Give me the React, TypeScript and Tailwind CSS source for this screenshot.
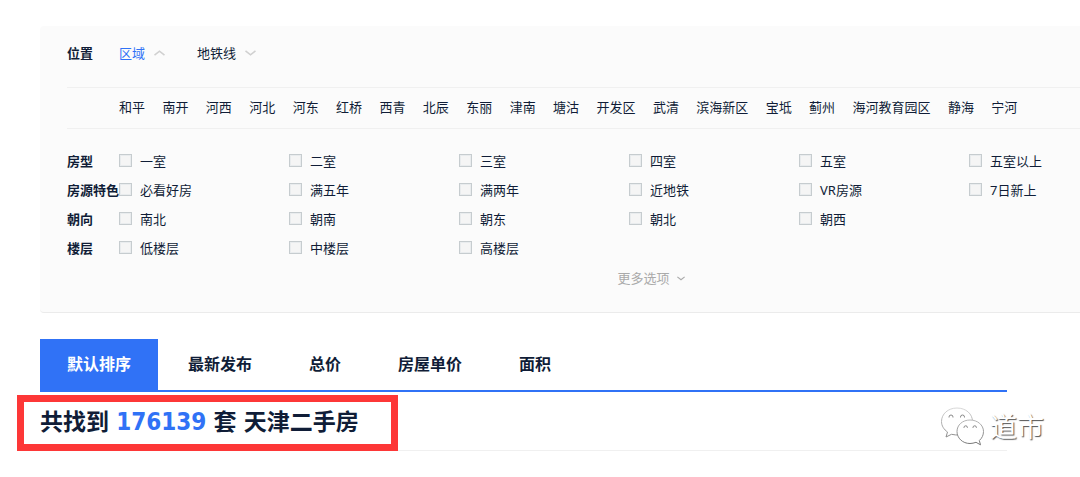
import { useState } from 'react'

interface FilterGroup {
  label: string
  options: string[]
}

const districts = [
  '和平', '南开', '河西', '河北', '河东', '红桥', '西青', '北辰', '东丽', '津南',
  '塘沽', '开发区', '武清', '滨海新区', '宝坻', '蓟州', '海河教育园区', '静海', '宁河'
]

const filterGroups: FilterGroup[] = [
  { label: '房型', options: ['一室', '二室', '三室', '四室', '五室', '五室以上'] },
  { label: '房源特色', options: ['必看好房', '满五年', '满两年', '近地铁', 'VR房源', '7日新上'] },
  { label: '朝向', options: ['南北', '朝南', '朝东', '朝北', '朝西'] },
  { label: '楼层', options: ['低楼层', '中楼层', '高楼层'] }
]

const sortTabs = ['默认排序', '最新发布', '总价', '房屋单价', '面积']

function Chevron({ up = false, className }: { up?: boolean; className: string }) {
  return (
    <svg viewBox="0 0 11 6" fill="none" stroke="currentColor" className={className} aria-hidden="true">
      <path d={up ? 'M0.5 5.2 L5.5 1.2 L10.5 5.2' : 'M0.5 0.8 L5.5 4.8 L10.5 0.8'} strokeWidth="1.6" />
    </svg>
  )
}

function Filters() {
  return (
    <section className="ml-10 min-w-[1222px] rounded-sm border-b border-[#ebebeb] bg-[#fbfbfb] pt-[17px] pb-6 pl-[27px] text-[13px] leading-5">
      <div className="flex pb-6">
        <h2 className="w-[52px] font-bold">位置</h2>
        <div className="flex gap-8">
          <button type="button" className="flex items-center gap-[9px] text-[#3072f6]">
            区域
            <Chevron up className="h-[6px] w-[11px] text-[#d0d0d0]" />
          </button>
          <button type="button" className="flex items-center gap-[9px]">
            地铁线
            <Chevron className="h-[6px] w-[11px] text-[#d0d0d0]" />
          </button>
        </div>
      </div>

      <div className="border-y border-[#f0f0f0] pt-[9px] pb-[11px] pl-[52px]">
        {districts.map((name) => (
          <span key={name}>
            <a href="#" className="mr-[14px]">{name}</a>{' '}
          </span>
        ))}
      </div>

      <div className="pt-[17px]">
        {filterGroups.map((group) => (
          <fieldset key={group.label} className="flex h-[29px] items-center">
            <legend className="float-left w-[52px] font-bold whitespace-nowrap">{group.label}</legend>
            {group.options.map((option) => (
              <label key={option} className="flex w-[170px] items-center gap-2">
                <input
                  type="checkbox"
                  className="size-[13px] appearance-none border border-[#c6cccf] bg-[#f5f5f5] shadow-[inset_0_0_0_1px_#e9ecee] checked:bg-[#3072f6]"
                />
                {option}
              </label>
            ))}
          </fieldset>
        ))}
      </div>

      <div className="mt-[6px] flex justify-center pr-[27px]">
        <button type="button" className="flex items-center gap-[7px] text-[#aaaaaa]">
          更多选项
          <Chevron className="h-[5px] w-2" />
        </button>
      </div>
    </section>
  )
}

function Watermark() {
  return (
    <div className="absolute top-[406px] left-[940px] flex items-center gap-1">
      <svg viewBox="0 0 46 42" className="h-[42px] w-[46px]" fill="#ffffff" stroke="url(#bubble)" strokeWidth="1" aria-hidden="true">
        <defs>
          <linearGradient id="bubble" gradientUnits="userSpaceOnUse" x1="0" y1="0" x2="0" y2="38">
            <stop offset="0" stopColor="#dddddd" />
            <stop offset="1" stopColor="#777777" />
          </linearGradient>
        </defs>
        <path d="M17 2 C8 2 1.500 8 1.500 15.500 C1.500 20 4 23.500 7.500 26 L6 31 L11.500 28.300 C14 29 17 29 19 29 C28 29 32.500 23 32.500 15.500 C32.500 8 26 2 17 2 Z" />
        <path d="M30 14 C22.500 14 17 19 17 25.500 C17 32 22.500 37.500 30 37.500 C32 37.500 34 37 36 36.300 L40.500 38.800 L39.300 34.500 C42 32.300 43.500 29 43.500 25.500 C43.500 19 37.500 14 30 14 Z" />
        <path
          stroke="#888888"
          d="M9 11.500 v-0.500 a2 2 0 0 1 4 0 v0.500 M20.500 11.500 v-0.500 a2 2 0 0 1 4 0 v0.500 M24 22 v-0.500 a1.700 1.700 0 0 1 3.400 0 v0.500 M33 22 v-0.500 a1.700 1.700 0 0 1 3.400 0 v0.500"
        />
      </svg>
      <span className="text-[27px] leading-8 text-white [text-shadow:1px_1px_1px_#555555]">道市</span>
    </div>
  )
}

export default function App() {
  const [activeTab, setActiveTab] = useState('默认排序')

  return (
    <div className="relative overflow-hidden bg-white pt-[26px] pb-[26px] font-['Noto_Sans','Noto_Sans_CJK_SC',sans-serif] text-[#101d37]">
      <Filters />

      <main className="mt-[26px] ml-10 max-w-[967px]">
        <div className="flex gap-[3px] border-b-2 border-[#3072f6]">
          {sortTabs.map((tab) => (
            <button
              key={tab}
              type="button"
              onClick={() => setActiveTab(tab)}
              className={`h-[51px] px-[27px] pb-[2px] text-base font-bold ${activeTab === tab ? 'bg-[#3072f6] text-white' : ''}`}
            >
              {tab}
            </button>
          ))}
        </div>

        <div className="relative border-b border-[#f0f0f0] pt-[14px] pb-3">
          <h1 className="font-['DejaVu_Sans_Condensed','Noto_Sans_CJK_SC',sans-serif] text-[23px] leading-8 font-bold">
            共找到 <span className="text-2xl leading-8 text-[#3072f6]">176139</span> 套 天津二手房
          </h1>
          <div className="pointer-events-none absolute top-[3px] -left-[23px] h-14 w-[381px] border-[7px] border-[#fd3737]" />
        </div>
      </main>

      <Watermark />
    </div>
  )
}
